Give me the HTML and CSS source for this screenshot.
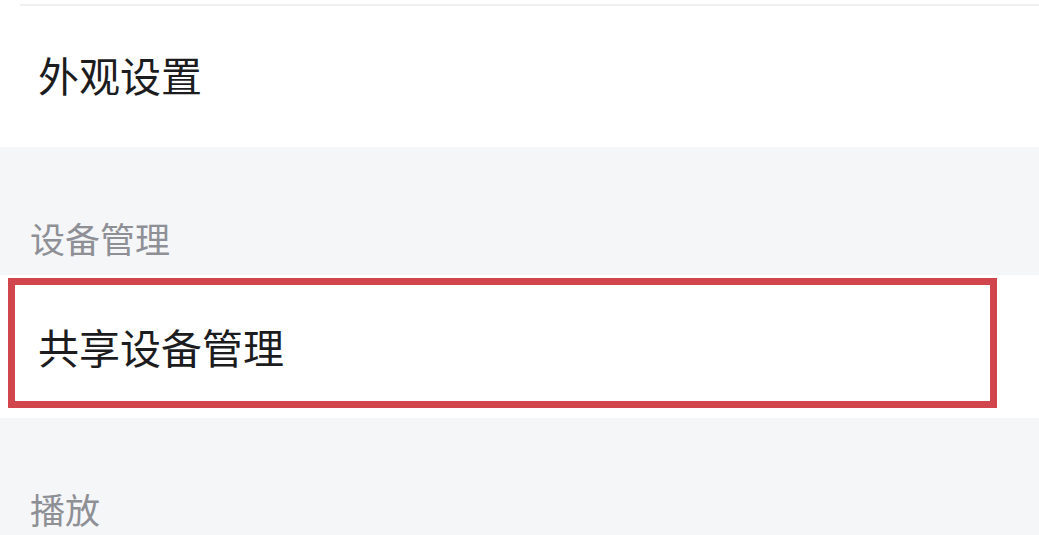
FILE: index.html
```html
<!DOCTYPE html>
<html lang="zh-CN">
<head>
<meta charset="utf-8">
<title>设置</title>
<link rel="stylesheet" href="styles.css">
</head>
<body>
  <div class="page">
    <section class="card card-top">
      <div class="divider"></div>
      <div class="row row-title">外观设置</div>
    </section>
    <div class="group-label">设备管理</div>
    <section class="card">
      <div class="row row-item">
        共享设备管理
        <div class="highlight"></div>
      </div>
    </section>
    <div class="group-label">播放</div>
  </div>
</body>
</html>
```
FILE: styles.css
```css
html, body {
  margin: 0;
  padding: 0;
}
body {
  background: #f5f6f8;
  font-family: "Noto Sans CJK SC", "Noto Sans", sans-serif;
  width: 1039px;
  height: 535px;
  overflow: hidden;
}
.page {
  display: flex;
  flex-direction: column;
}
.card {
  background: #ffffff;
}
.card-top {
  height: 147px;
  display: flex;
  flex-direction: column;
}
.divider {
  margin-top: 4px;
  margin-left: 20px;
  height: 2px;
  background: #eef0f2;
}
.row {
  display: flex;
  align-items: center;
  color: #1c1c1e;
  font-size: 41px;
  line-height: 41px;
  padding-left: 38px;
  box-sizing: border-box;
}
.row-title {
  flex: 1;
  padding-bottom: 4px;
}
.row-item {
  position: relative;
  height: 143px;
}
.group-label {
  height: 128px;
  box-sizing: border-box;
  padding-top: 73px;
  padding-left: 30px;
  font-size: 35px;
  line-height: 35px;
  color: #8e9096;
}
.highlight {
  position: absolute;
  left: 8px;
  top: 3px;
  width: 989px;
  height: 130px;
  box-sizing: border-box;
  border: 7px solid #d0464c;
}
```
